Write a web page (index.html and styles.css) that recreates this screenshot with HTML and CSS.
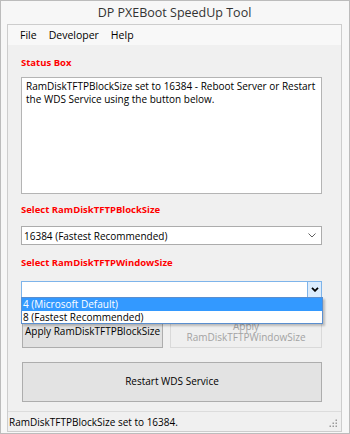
FILE: index.html
```html
<!DOCTYPE html>
<html>
<head>
<meta charset="utf-8">
<link rel="stylesheet" href="styles.css">
</head>
<body>
<div class="window">
  <div class="titlebar">DP PXEBoot SpeedUp Tool</div>
  <div class="client">
    <div class="menubar">
      <span class="menu-item">File</span>
      <span class="menu-item">Developer</span>
      <span class="menu-item">Help</span>
    </div>
    <div class="content">
      <div class="label label-status">Status Box</div>
      <div class="textbox">RamDiskTFTPBlockSize set to 16384 - Reboot Server or Restart the WDS Service using the button below.</div>
      <div class="label label-block">Select RamDiskTFTPBlockSize</div>
      <div class="combo combo-block">
        <span class="combo-text">16384 (Fastest Recommended)</span>
        <svg class="chev" width="8" height="5" viewBox="0 0 8 5"><polyline points="0.5,0.5 4,4 7.5,0.5" fill="none" stroke="#606060" stroke-width="1"/></svg>
      </div>
      <div class="label label-window">Select RamDiskTFTPWindowSize</div>
      <div class="combo combo-window">
        <span class="combo-text"></span>
        <span class="combo-btn"><svg width="8" height="5" viewBox="0 0 8 5"><polyline points="1,0.8 4,3.8 7,0.8" fill="none" stroke="#000" stroke-width="1.8"/></svg></span>
        <div class="droplist">
          <div class="drop-item selected">4 (Microsoft Default)</div>
          <div class="drop-item">8 (Fastest Recommended)</div>
        </div>
      </div>
      <div class="btn-row">
        <div class="btn btn-apply">Apply RamDiskTFTPBlockSize</div>
        <div class="btn btn-disabled">Apply<br>RamDiskTFTPWindowSize</div>
      </div>
      <div class="btn btn-restart">Restart WDS Service</div>
    </div>
    <div class="statusbar">
      <span class="status-text">RamDiskTFTPBlockSize set to 16384.</span>
      <svg class="grip" width="10" height="10" viewBox="0 0 10 10">
        <rect x="7.5" y="0.5" width="1.5" height="1.5" fill="#9a9a9a"/>
        <rect x="4.5" y="3.5" width="1.5" height="1.5" fill="#9a9a9a"/>
        <rect x="7.5" y="3.5" width="1.5" height="1.5" fill="#9a9a9a"/>
        <rect x="1.5" y="6.5" width="1.5" height="1.5" fill="#9a9a9a"/>
        <rect x="4.5" y="6.5" width="1.5" height="1.5" fill="#9a9a9a"/>
        <rect x="7.5" y="6.5" width="1.5" height="1.5" fill="#9a9a9a"/>
      </svg>
    </div>
  </div>
</div>
</body>
</html>
```
FILE: styles.css
```css
* { box-sizing: border-box; }
html, body { margin: 0; padding: 0; }
body {
  width: 350px;
  height: 434px;
  overflow: hidden;
  font-family: "Open Sans", "Noto Sans", sans-serif;
  font-size: 10px;
  color: #000;
}
.window {
  width: 350px;
  height: 434px;
  border: 1px solid #bcbcbc;
  background: #f7f7f7;
  padding: 0 7px 1px 6px;
  display: flex;
  flex-direction: column;
}
.titlebar {
  height: 23px;
  line-height: 24px;
  text-align: center;
  font-size: 12.5px;
  color: #333;
}
.client {
  flex: 1;
  border: 1px solid #cdcdcd;
  background: #f0f0f0;
  display: flex;
  flex-direction: column;
}
.menubar {
  height: 20px;
  background: #f8f8f8;
  display: flex;
  align-items: center;
  padding-left: 12px;
  gap: 12px;
  font-size: 10.5px;
}
.content {
  flex: 1;
  display: flex;
  flex-direction: column;
  padding: 0 19px 0 13px;
}
.label {
  color: #ff0000;
  font-weight: 700;
  font-size: 9.5px;
  height: 13px;
  line-height: 13px;
}
.label-status { margin-top: 11px; }
.label-block { margin-top: 9px; }
.label-window { margin-top: 11px; }
.textbox {
  margin-top: 8px;
  height: 117px;
  background: #fff;
  border: 1px solid #b4b4b4;
  padding: 2px 4px;
  line-height: 12.5px;
}
.combo {
  position: relative;
  background: #fff;
  border: 1px solid #acacac;
  display: flex;
  align-items: center;
}
.combo-block {
  margin-top: 10px;
  height: 19px;
  padding-left: 2px;
}
.combo-text { flex: 1; }
.chev { margin-right: 5px; }
.combo-window {
  margin-top: 12px;
  height: 17px;
  border-color: #7eb4ea;
}
.combo-btn {
  width: 14px;
  height: 100%;
  background: #dcecfc;
  border-left: 1px solid #7eb4ea;
  display: flex;
  align-items: center;
  justify-content: center;
}
.droplist {
  position: absolute;
  top: 100%;
  left: -1px;
  right: -2px;
  background: #fff;
  border: 1px solid #5a8fd0;
  box-shadow: 2px 2px 2px rgba(0, 0, 0, 0.22);
  z-index: 2;
}
.drop-item {
  height: 12.5px;
  line-height: 12.5px;
  padding-left: 1px;
}
.drop-item.selected {
  background: #3399ff;
  color: #fff;
}
.btn-row {
  margin-top: 16px;
  display: flex;
  gap: 7px;
  padding-left: 1px;
}
.btn {
  display: flex;
  align-items: center;
  justify-content: center;
  text-align: center;
  line-height: 11.5px;
}
.btn-apply {
  width: 141px;
  height: 34px;
  background: #e1e1e1;
  border: 1px solid #adadad;
  padding-top: 2px;
}
.btn-disabled {
  flex: 1;
  height: 34px;
  background: #efefef;
  border: 1px solid #d9d9d9;
  color: #a3a3a3;
  padding-top: 2px;
}
.btn-restart {
  margin-top: 14px;
  margin-left: 1px;
  height: 40px;
  background: #e3e3e3;
  border: 1px solid #adadad;
}
.statusbar {
  margin-top: 9px;
  border-top: 1px solid #dcdcdc;
  flex: 1;
  display: flex;
  align-items: center;
  justify-content: space-between;
  padding: 0 3px 0 1px;
}
.grip { align-self: flex-end; margin-bottom: 2px; }
```
